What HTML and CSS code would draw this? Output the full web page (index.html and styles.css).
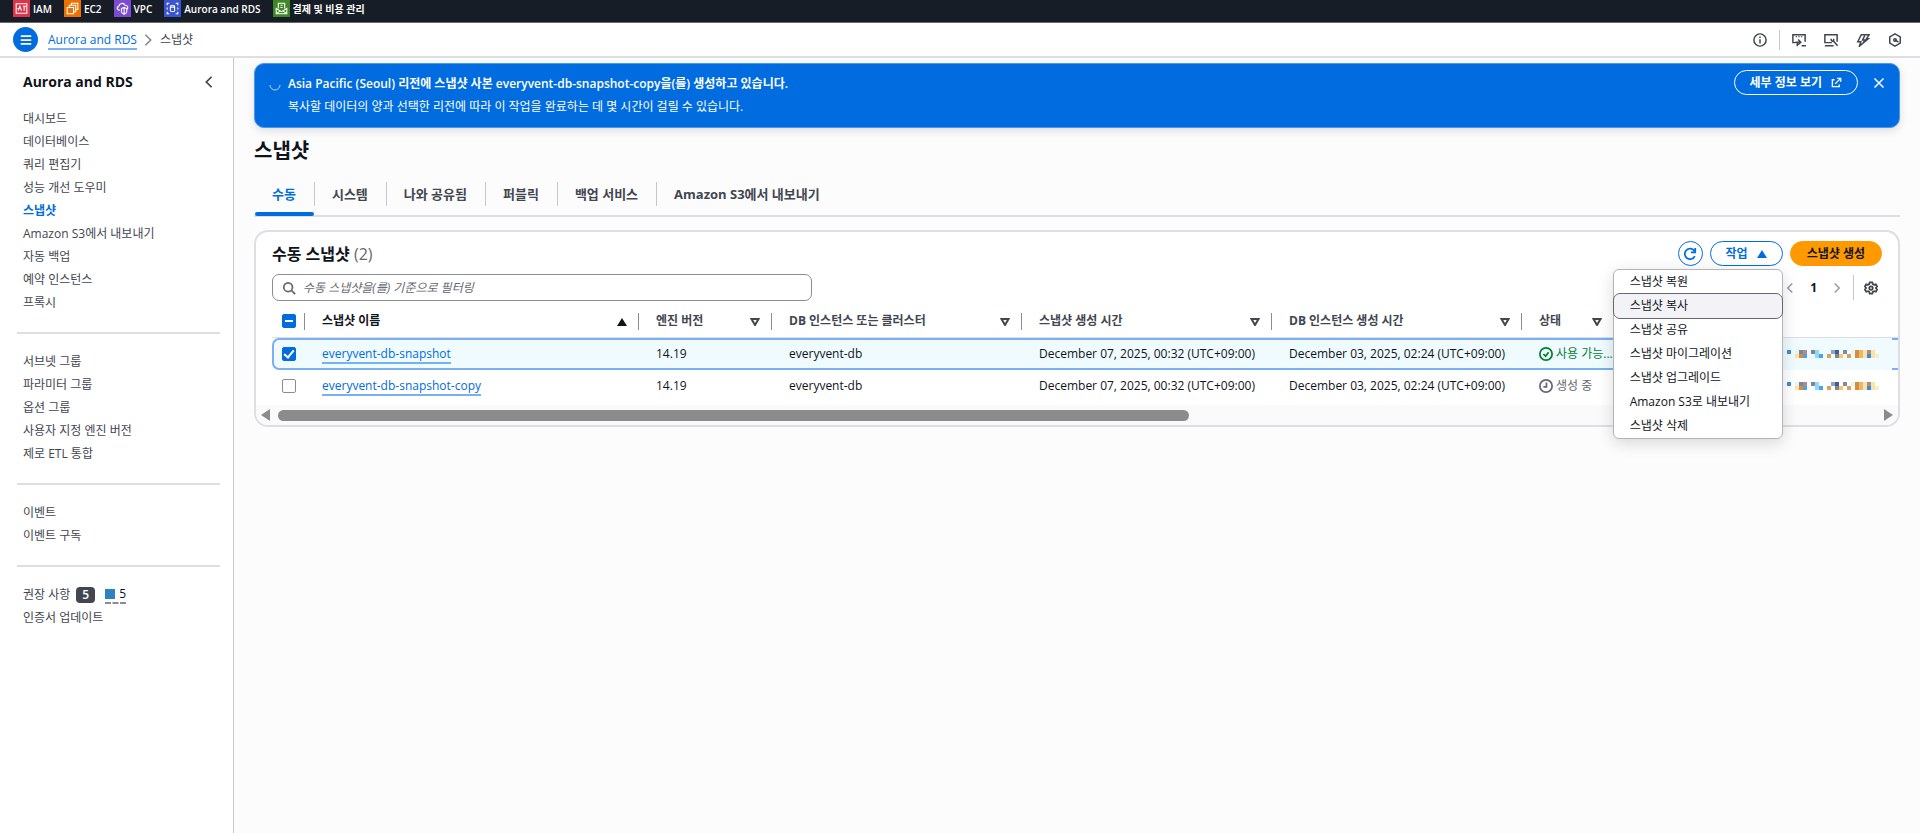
FILE: index.html
```
<!DOCTYPE html>
<html lang="ko">
<head>
    <meta charset="UTF-8">
    <meta name="viewport" content="width=device-width, initial-scale=1.0">
    <title>스냅샷 | Aurora and RDS</title>
    <link rel="stylesheet" href="styles.css">
</head>
<body>
    <nav class="favorites">
        <a href="#"><svg class="service-icon red" viewBox="0 0 16 16"><path d="M3 3.500h10v9H3zM5 10l1.500-4L8 10M9.500 6h2.500M10.500 6v4M4 8h1"/></svg>IAM</a>
        <a href="#"><svg class="service-icon orange" viewBox="0 0 16 16"><path d="M3 7h6v6H3zM5 7V5h6v6H9M7 5V3h6v6h-2"/></svg>EC2</a>
        <a href="#"><svg class="service-icon purple" viewBox="0 0 16 16"><path d="M5.500 9.500H4.500C2.500 9 2.500 6.500 4.500 6 5 3 9 2 10.500 5c2.500 0 3 2.500 2 3.500M7 8l2.500-1L12 8v3c0 1-1.500 2-2.500 2.500C8.500 13 7 12 7 11zM9.500 7v6"/></svg>VPC</a>
        <a href="#"><svg class="service-icon blue" viewBox="0 0 16 16"><path d="M3 5V3h2M11 3h2v2M3 11v2h2M11 13h2v-2M3 7v2M13 7v2M6 6c0-1 4-1 4 0v4c0 1-4 1-4 0zM6 6c0 1 4 1 4 0"/></svg>Aurora and RDS</a>
        <a href="#"><svg class="service-icon green" viewBox="0 0 16 16"><path d="M5 8V3h6v5M3 8l5 3 5-3v5H3zM3 13l4-3M13 13l-4-3M7 5h2M7 7h2"/></svg>결제 및 비용 관리</a>
    </nav>

    <header class="topbar">
        <button class="menu-btn" aria-label="메뉴"><svg viewBox="0 0 16 16"><path d="M2 3.500h12M2 8h12M2 12.500h12"/></svg></button>
        <a class="link crumb" href="#">Aurora and RDS</a>
        <svg class="icon crumb-arrow" viewBox="0 0 16 16"><path d="M5 2l6 6-6 6"/></svg>
        <span class="crumb-current">스냅샷</span>
        <div class="tools">
            <button aria-label="정보"><svg class="icon" viewBox="0 0 16 16"><circle cx="8" cy="8" r="7"/><path d="M8 7v5M8 4v1.800"/></svg></button>
            <span class="tool-line"></span>
            <button aria-label="CloudShell"><svg class="icon" viewBox="0 0 16 16"><path d="M4 11H1V2h14v8M5 3.800v1M8 3.800v1M11 3.800v1M4 10.500h5.500M7 7.500l3 3-3 3M6 11v4M11 14.500h5"/></svg></button>
            <button aria-label="도구"><svg class="icon" viewBox="0 0 16 16"><path d="M9 11H1V2h14v8M1 14.500h10M8 6.500c0 2 1 3 3 3l4.500 5M11 6.500v3"/></svg></button>
            <button aria-label="빠른 작업"><svg class="icon" viewBox="0 0 16 16"><path d="M6 2h9l-3 4.500h2L4 15l1.500-5H2zM10 3L7.500 8H10l-1.500 3"/></svg></button>
            <button aria-label="설정"><svg class="icon" viewBox="0 0 16 16"><path d="M8 1l6 3.500v7L8 15l-6-3.500v-7zM8 8l4 2.500"/><circle cx="8" cy="8" r="1.500"/></svg></button>
        </div>
    </header>

    <div class="page">
        <aside class="sidebar">
            <div class="sidebar-title">
                <h2>Aurora and RDS</h2>
                <button aria-label="닫기"><svg class="icon" viewBox="0 0 16 16"><path d="M11 2L5 8l6 6"/></svg></button>
            </div>
            <ul>
                <li><a href="#">대시보드</a></li>
                <li><a href="#">데이터베이스</a></li>
                <li><a href="#">쿼리 편집기</a></li>
                <li><a href="#">성능 개선 도우미</a></li>
                <li><a class="current" href="#">스냅샷</a></li>
                <li><a href="#">Amazon S3에서 내보내기</a></li>
                <li><a href="#">자동 백업</a></li>
                <li><a href="#">예약 인스턴스</a></li>
                <li><a href="#">프록시</a></li>
            </ul>
            <ul>
                <li><a href="#">서브넷 그룹</a></li>
                <li><a href="#">파라미터 그룹</a></li>
                <li><a href="#">옵션 그룹</a></li>
                <li><a href="#">사용자 지정 엔진 버전</a></li>
                <li><a href="#">제로 ETL 통합</a></li>
            </ul>
            <ul>
                <li><a href="#">이벤트</a></li>
                <li><a href="#">이벤트 구독</a></li>
            </ul>
            <ul>
                <li><a href="#">권장 사항</a><span class="badge">5</span><span class="count">5</span></li>
                <li><a href="#">인증서 업데이트</a></li>
            </ul>
        </aside>

        <main>
            <div class="flash">
                <svg class="spinner" viewBox="0 0 12 12"><path d="M1 5a5 5 0 0 0 10 0"/></svg>
                <div class="flash-text">
                    <strong>Asia Pacific (Seoul) 리전에 스냅샷 사본 everyvent-db-snapshot-copy을(를) 생성하고 있습니다.</strong>
                    <p>복사할 데이터의 양과 선택한 리전에 따라 이 작업을 완료하는 데 몇 시간이 걸릴 수 있습니다.</p>
                </div>
                <button class="btn flash-btn">세부 정보 보기 <svg class="icon" viewBox="0 0 16 16"><path d="M9 2h5v5M14 2L6 10M5 4H2v10h10v-3"/></svg></button>
                <button class="flash-close" aria-label="닫기"><svg class="icon" viewBox="0 0 16 16"><path d="M2 2l12 12M14 2L2 14"/></svg></button>
            </div>

            <h1>스냅샷</h1>

            <div class="tabs" role="tablist">
                <button role="tab" class="active" aria-selected="true">수동</button>
                <button role="tab">시스템</button>
                <button role="tab">나와 공유됨</button>
                <button role="tab">퍼블릭</button>
                <button role="tab">백업 서비스</button>
                <button role="tab">Amazon S3에서 내보내기</button>
            </div>

            <section class="panel">
                <div class="panel-head">
                    <h2>수동 스냅샷 <span>(2)</span></h2>
                    <button class="btn round" aria-label="새로 고침"><svg class="icon" viewBox="0 0 16 16"><path d="M13.500 10.500a6 6 0 1 1-.5-6M14 1v5H9"/></svg></button>
                    <div class="dropdown">
                        <button class="btn">작업 <svg class="caret" viewBox="0 0 10 10"><path d="M5 1l5 8H0z"/></svg></button>
                        <div class="menu">
                            <button>스냅샷 복원</button>
                            <button class="focus">스냅샷 복사</button>
                            <button>스냅샷 공유</button>
                            <button>스냅샷 마이그레이션</button>
                            <button>스냅샷 업그레이드</button>
                            <button>Amazon S3로 내보내기</button>
                            <button>스냅샷 삭제</button>
                        </div>
                    </div>
                    <button class="btn primary">스냅샷 생성</button>
                </div>

                <div class="filter-row">
                    <label class="search">
                        <svg class="icon" viewBox="0 0 16 16"><circle cx="7" cy="7" r="5"/><path d="M11 11l4 4"/></svg>
                        <input type="text" aria-label="필터" placeholder="수동 스냅샷을(를) 기준으로 필터링">
                    </label>
                    <div class="pager">
                        <button aria-label="이전"><svg class="icon" viewBox="0 0 16 16"><path d="M11 2L5 8l6 6"/></svg></button>
                        <button class="page-num">1</button>
                        <button aria-label="다음"><svg class="icon" viewBox="0 0 16 16"><path d="M5 2l6 6-6 6"/></svg></button>
                        <span class="pager-line"></span>
                        <button class="gear" aria-label="기본 설정"><svg class="icon" viewBox="0 0 16 16"><path d="M6.500 1.500h3l.5 2 1.500.8 2-.6 1.500 2.600L13.500 8l1.500 1.700-1.500 2.600-2-.6-1.500.8-.5 2h-3l-.5-2-1.500-.8-2 .6L1 9.700 2.500 8 1 6.300l1.500-2.600 2 .6L6 3.500z"/><circle cx="8" cy="8" r="2"/></svg></button>
                    </div>
                </div>

                <div class="table-wrap">
                    <table>
                        <colgroup>
                            <col class="col-check"><col class="col-name"><col class="col-version"><col class="col-date"><col class="col-date"><col class="col-date"><col class="col-status"><col><col class="col-masked"><col class="col-end">
                        </colgroup>
                        <thead>
                            <tr>
                                <th><div><input type="checkbox" class="check mixed" aria-label="모두 선택"></div></th>
                                <th class="sorted"><div>스냅샷 이름<svg class="caret" viewBox="0 0 10 10"><path d="M5 2l5 8H0z"/></svg></div></th>
                                <th><div>엔진 버전<svg class="caret open" viewBox="0 0 10 10"><path d="M1.500 3h7L5 9z"/></svg></div></th>
                                <th><div>DB 인스턴스 또는 클러스터<svg class="caret open" viewBox="0 0 10 10"><path d="M1.500 3h7L5 9z"/></svg></div></th>
                                <th><div>스냅샷 생성 시간<svg class="caret open" viewBox="0 0 10 10"><path d="M1.500 3h7L5 9z"/></svg></div></th>
                                <th><div>DB 인스턴스 생성 시간<svg class="caret open" viewBox="0 0 10 10"><path d="M1.500 3h7L5 9z"/></svg></div></th>
                                <th><div>상태<svg class="caret open" viewBox="0 0 10 10"><path d="M1.500 3h7L5 9z"/></svg></div></th>
                                <th colspan="3"></th>
                            </tr>
                        </thead>
                        <tbody>
                            <tr class="selected">
                                <td><input type="checkbox" class="check" aria-label="everyvent-db-snapshot" checked></td>
                                <td><a class="link" href="#">everyvent-db-snapshot</a></td>
                                <td>14.19</td>
                                <td>everyvent-db</td>
                                <td>December 07, 2025, 00:32 (UTC+09:00)</td>
                                <td>December 03, 2025, 02:24 (UTC+09:00)</td>
                                <td><span class="status ok"><svg class="icon" viewBox="0 0 16 16"><circle cx="8" cy="8" r="7"/><path d="M5 8l2.500 2.500L11 6"/></svg>사용 가능...</span></td>
                                <td></td>
                                <td class="masked"><svg viewBox="0 0 92 8"><use href="#mosaic"/></svg></td>
                                <td></td>
                            </tr>
                            <tr>
                                <td><input type="checkbox" class="check" aria-label="everyvent-db-snapshot-copy"></td>
                                <td><a class="link" href="#">everyvent-db-snapshot-copy</a></td>
                                <td>14.19</td>
                                <td>everyvent-db</td>
                                <td>December 07, 2025, 00:32 (UTC+09:00)</td>
                                <td>December 03, 2025, 02:24 (UTC+09:00)</td>
                                <td><span class="status pending"><svg class="icon" viewBox="0 0 16 16"><circle cx="8" cy="8" r="7"/><path d="M8.500 4v5H5"/></svg>생성 중</span></td>
                                <td></td>
                                <td class="masked"><svg viewBox="0 0 92 8"><use href="#mosaic"/></svg></td>
                                <td></td>
                            </tr>
                        </tbody>
                    </table>
                </div>

                <div class="scrollbar">
                    <svg viewBox="0 0 10 12"><path d="M9 0v12L0 6z"/></svg>
                    <div class="track"><div class="thumb"></div></div>
                    <svg viewBox="0 0 10 12"><path d="M1 0v12l9-6z"/></svg>
                </div>
            </section>
        </main>
    </div>

    <svg class="defs">
        <defs>
            <g id="mosaic" shape-rendering="crispEdges">
                <path fill="#3d8ad6" d="M0 0h4v4H0zM80 4h4v4h-4z"/>
                <path fill="#4fa0e8" d="M16 4h4v4h-4zM32 4h4v4h-4z"/>
                <path fill="#e3f8ee" d="M8 0h4v4H8zM64 0h4v4h-4z"/>
                <path fill="#fbe3a5" d="M8 4h4v4H8zM76 0h4v8h-4zM84 0h4v8h-4z"/>
                <path fill="#7f868f" d="M12 0h4v4h-4zM24 0h4v4h-4zM48 4h4v4h-4z"/>
                <path fill="#d98b3e" d="M12 4h4v4h-4zM68 0h4v8h-4z"/>
                <path fill="#a98e8b" d="M16 0h4v4h-4zM80 0h4v4h-4z"/>
                <path fill="#8cdaff" d="M28 0h4v8h-4z"/>
                <path fill="#dca257" d="M40 4h4v4h-4zM60 4h4v4h-4z"/>
                <path fill="#88a3d6" d="M44 0h4v4h-4z"/>
                <path fill="#4c5a94" d="M48 0h4v4h-4z"/>
                <path fill="#f5c67a" d="M52 4h4v4h-4z"/>
                <path fill="#8a869c" d="M56 0h4v4h-4z"/>
                <path fill="#e5ba68" d="M72 0h4v8h-4z"/>
                <path fill="#f3efc8" d="M88 4h4v4h-4z"/>
            </g>
        </defs>
    </svg>
</body>
</html>
```

FILE: styles.css
```
:root {
    --blue: #006ce0;
    --text: #0f141a;
    --muted: #424650;
    --line: #dedee3;
}

* {
    box-sizing: border-box;
}

body {
    margin: 0;
    min-height: 100vh;
    display: flex;
    flex-direction: column;
    background: #fcfcfd;
    color: var(--text);
    font-family: "Open Sans", "Noto Sans CJK KR", sans-serif;
    font-size: 12px;
    line-height: 16px;
}

h1, h2, p, ul {
    margin: 0;
    padding: 0;
}

button {
    padding: 0;
    border: 0;
    background: none;
    color: inherit;
    font: inherit;
    cursor: pointer;
}

a {
    color: inherit;
    text-decoration: none;
}

.link {
    color: var(--blue);
    border-bottom: 2px solid #78b0f2;
}

.icon {
    display: block;
    width: 14px;
    height: 14px;
    fill: none;
    stroke: currentColor;
    stroke-width: 2;
}

.defs {
    position: absolute;
    width: 0;
    height: 0;
}

/* favorites bar */
.favorites {
    display: flex;
    gap: 12px;
    height: 23px;
    padding: 0 13px;
    background: #161d26;
    border-bottom: 1px solid #656871;
    color: #fff;
    font-size: 10px;
    font-weight: 600;
}

.favorites a {
    display: flex;
    gap: 3px;
    height: 17px;
    align-items: center;
}

.service-icon {
    width: 17px;
    height: 17px;
    fill: none;
    stroke: #fff;
}

.red { background: #dd344c; }
.orange { background: #ed7100; }
.purple { background: #7d4bd0; }
.blue { background: #3b55d0; }
.green { background: #3f8624; }

/* breadcrumb bar */
.topbar {
    display: flex;
    align-items: center;
    height: 35px;
    padding: 0 18px 0 13px;
    background: #fff;
    border-bottom: 2px solid var(--line);
}

.menu-btn {
    display: flex;
    align-items: center;
    justify-content: center;
    width: 25px;
    height: 25px;
    border-radius: 50%;
    background: var(--blue);
}

.menu-btn svg {
    width: 14px;
    height: 14px;
    stroke: #fff;
    stroke-width: 2;
}

.crumb {
    margin: 2px 0 0 10px;
}

.crumb-arrow {
    margin: 0 5px 0 4px;
    color: #8c8c94;
}

.crumb-current {
    color: var(--muted);
}

.tools {
    display: flex;
    align-items: center;
    gap: 18px;
    margin-left: auto;
    color: var(--muted);
}

.tools .icon {
    stroke-width: 1.700;
}

.tool-line {
    width: 1px;
    height: 20px;
    margin: 0 -6px;
    background: #c6c6cd;
}

.page {
    flex: 1;
    display: flex;
}

/* side navigation */
.sidebar {
    flex: none;
    width: 234px;
    padding: 15px 13px 0 17px;
    background: #fff;
    border-right: 1px solid #c6c6cd;
    color: var(--muted);
}

.sidebar-title {
    display: flex;
    align-items: center;
    justify-content: space-between;
    height: 18px;
    margin-bottom: 11px;
    padding: 0 4px 0 6px;
}

.sidebar-title h2 {
    color: var(--text);
    font-size: 14px;
}

.sidebar ul {
    list-style: none;
    padding: 5px 6px 18px;
}

.sidebar ul + ul {
    padding-top: 16px;
    border-top: 2px solid var(--line);
}

.sidebar li {
    display: flex;
    align-items: center;
    height: 23px;
}

.sidebar .current {
    color: var(--blue);
    font-weight: 700;
}

.badge {
    margin: 0 10px 0 6px;
    padding: 0 6px;
    border-radius: 4px;
    background: var(--muted);
    color: #fff;
    font-weight: 600;
}

.count {
    display: flex;
    align-items: center;
    gap: 4px;
    border-bottom: 2px dashed #8c8c94;
    color: var(--text);
}

.count::before {
    content: "";
    width: 10px;
    height: 10px;
    background: #2e82c3;
}

/* content */
main {
    flex: 1;
    min-width: 0;
    padding: 5px 20px 20px;
}

.flash {
    display: flex;
    align-items: flex-start;
    height: 65px;
    padding: 6px 14px;
    border: 1px solid #4d98ea;
    border-radius: 10px;
    background: var(--blue);
    box-shadow: 0 3px 8px rgba(0, 7, 22, 0.12);
    color: #fff;
}

.spinner {
    width: 12px;
    height: 12px;
    margin: 10px 7px 0 0;
    fill: none;
    stroke: #b8d7ff;
    stroke-width: 1;
}

.flash-text {
    flex: 1;
    padding-top: 6px;
}

.flash-text strong {
    font-weight: 600;
}

.flash-text p {
    margin-top: 7px;
}

.btn {
    display: flex;
    align-items: center;
    justify-content: center;
    gap: 9px;
    height: 25px;
    padding: 0 15px;
    border: 1px solid var(--blue);
    border-radius: 13px;
    color: var(--blue);
    font-weight: 700;
}

.flash-btn {
    border-color: #fff;
    color: #fff;
}

.flash-btn .icon {
    width: 11px;
    height: 11px;
}

.flash-close {
    margin: 7px 0 0 15px;
}

.flash-close .icon {
    width: 12px;
    height: 12px;
}

h1 {
    margin: 10px 0 8px;
    font-size: 20px;
    line-height: 26px;
}

.tabs {
    display: flex;
    border-bottom: 2px solid var(--line);
    color: var(--muted);
    font-size: 13px;
    font-weight: 700;
}

.tabs button {
    position: relative;
    height: 43px;
    padding: 0 18px;
}

.tabs .active {
    color: var(--blue);
}

.tabs button + button::before {
    content: "";
    position: absolute;
    top: 10px;
    left: 0;
    width: 1px;
    height: 24px;
    background: #c6c6cd;
}

.tabs .active::after {
    content: "";
    position: absolute;
    right: 0;
    bottom: -1px;
    left: 1px;
    height: 4px;
    border-radius: 2px;
    background: var(--blue);
}

/* snapshot list */
.panel {
    margin-top: 13px;
    border: 2px solid var(--line);
    border-radius: 14px;
    background: #fff;
}

.panel-head {
    display: flex;
    align-items: center;
    gap: 7px;
    padding: 9px 16px 0;
}

.panel-head h2 {
    margin-right: auto;
    font-size: 16px;
    line-height: 24px;
}

.panel-head h2 span {
    color: #656871;
    font-weight: 400;
}

.round {
    width: 25px;
    padding: 0;
}

.dropdown {
    position: relative;
}

.primary {
    padding: 0 16px;
    border-color: #ff9900;
    background: #ff9900;
    color: var(--text);
}

.caret {
    width: 10px;
    height: 10px;
    fill: currentColor;
}

.caret.open {
    fill: none;
    stroke: currentColor;
    stroke-width: 2;
}

.menu {
    position: absolute;
    top: 28px;
    right: 0;
    z-index: 2;
    width: 170px;
    border: 1px solid #b4b4bb;
    border-radius: 6px;
    background: #fff;
    box-shadow: 0 4px 16px rgba(0, 7, 22, 0.15);
}

.menu button {
    display: block;
    width: 100%;
    height: 24px;
    padding: 0 16px;
    text-align: left;
}

.menu .focus {
    outline: 1px solid #656871;
    border-radius: 6px;
    background: #f3f3f7;
}

.filter-row {
    display: flex;
    align-items: center;
    justify-content: space-between;
    padding: 8px 16px 0;
}

.search {
    display: flex;
    align-items: center;
    gap: 7px;
    width: 540px;
    height: 27px;
    padding: 0 9px;
    border: 1px solid #8c8c94;
    border-radius: 7px;
    color: #656871;
}

.search input {
    flex: 1;
    padding: 0;
    border: 0;
    outline: 0;
    background: none;
    font: inherit;
}

.search input::placeholder {
    color: #656871;
    font-style: italic;
}

.pager {
    display: flex;
    align-items: center;
    gap: 10px;
    color: #9a9aa3;
}

.pager .icon {
    width: 12px;
}

.page-num {
    margin: 0 4px;
    color: var(--text);
    font-weight: 700;
}

.pager-line {
    width: 1px;
    height: 25px;
    background: #c6c6cd;
}

.gear {
    margin-right: 4px;
    color: var(--muted);
}

.pager .gear .icon {
    width: 14px;
}

.table-wrap {
    overflow: hidden;
    padding: 4px 0 0 16px;
}

table {
    width: 100%;
    table-layout: fixed;
    border-collapse: separate;
    border-spacing: 0;
}

.col-check { width: 33px; }
.col-name { width: 334px; }
.col-version { width: 133px; }
.col-date { width: 250px; }
.col-status { width: 92px; }
.col-masked { width: 110px; }
.col-end { width: 6px; }

th, td {
    height: 32px;
    padding: 0 0 0 17px;
    text-align: left;
    white-space: nowrap;
}

th {
    height: 33px;
    color: var(--muted);
    border-bottom: 1px solid var(--line);
}

th div {
    display: flex;
    align-items: center;
    justify-content: space-between;
    height: 17px;
    padding-right: 11px;
    border-right: 1px solid #8c8c94;
}

.sorted {
    color: var(--text);
}

th:first-child, td:first-child {
    padding-left: 10px;
}

th:first-child div {
    padding-right: 0;
}

td:last-child {
    padding: 0;
}

.check {
    appearance: none;
    display: grid;
    place-content: center;
    width: 14px;
    height: 14px;
    margin: 0;
    border: 1px solid #8c8c94;
    border-radius: 2px;
    background: #fff;
}

.check:checked, .mixed {
    border-color: var(--blue);
    background: var(--blue);
}

.check:checked::before {
    content: "";
    width: 4px;
    height: 8px;
    margin-bottom: 2px;
    border: solid #fff;
    border-width: 0 2px 2px 0;
    transform: rotate(40deg);
}

.mixed::before {
    content: "";
    width: 8px;
    height: 2px;
    background: #fff;
}

.selected td {
    border-top: 2px solid #78b0f2;
    border-bottom: 2px solid #78b0f2;
    background: #f0fbff;
}

.selected td:first-child {
    padding-left: 8px;
    border-left: 2px solid #78b0f2;
    border-radius: 7px 0 0 7px;
}

.selected .masked {
    border-color: #f0fbff;
}

.status {
    display: flex;
    align-items: center;
    gap: 3px;
}

.ok { color: #00802f; }
.pending { color: #656871; }

.masked {
    padding-left: 5px;
}

.masked svg {
    display: block;
    width: 92px;
    height: 8px;
}

.scrollbar {
    display: flex;
    align-items: center;
    gap: 7px;
    height: 20px;
    margin-top: 3px;
    padding: 0 5px;
    border-radius: 0 0 12px 12px;
    background: #fafafa;
}

.scrollbar svg {
    width: 10px;
    height: 12px;
    fill: #8b8b8b;
}

.track {
    flex: 1;
}

.thumb {
    width: 57%;
    height: 11px;
    border-radius: 6px;
    background: #8b8b8b;
}
```
